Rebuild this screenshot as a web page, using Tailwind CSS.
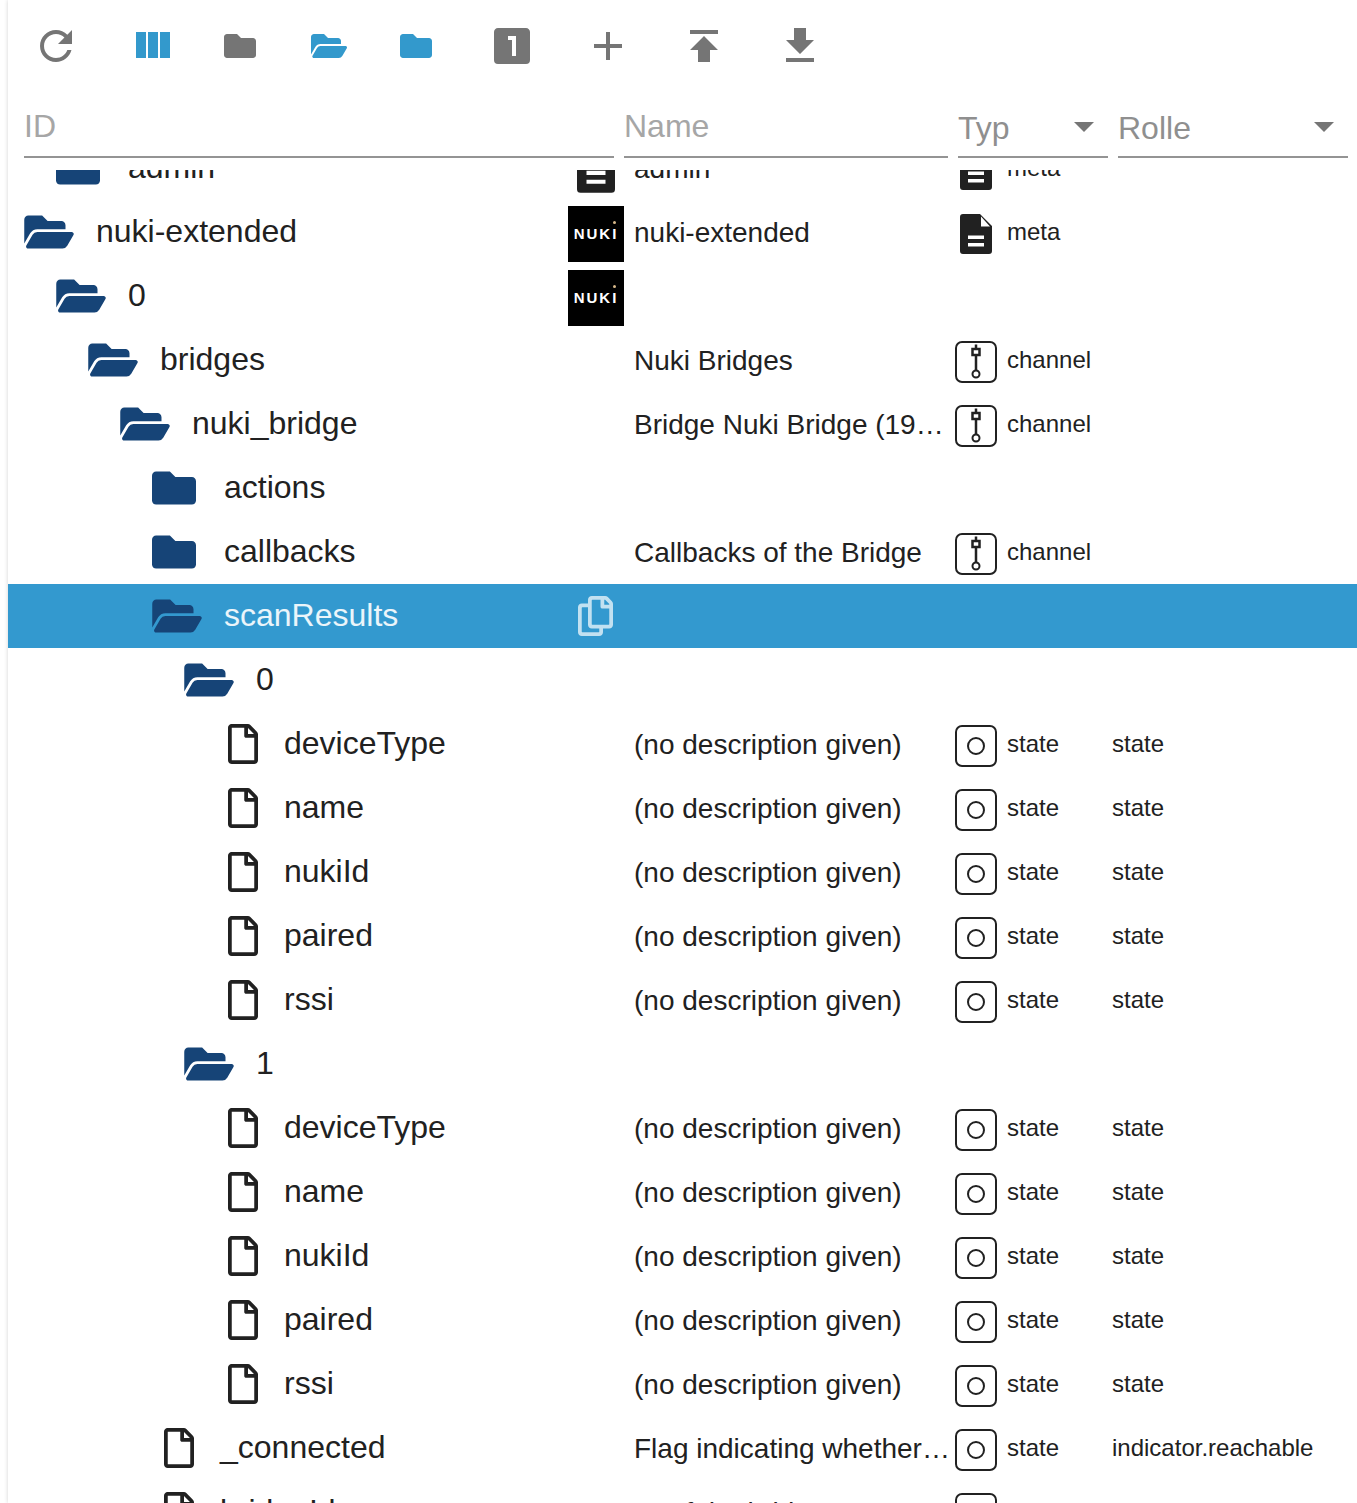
<!DOCTYPE html>
<html lang="de">
<head>
    <meta charset="UTF-8">
    <title>Objekte</title>
    <script src="https://cdn.jsdelivr.net/npm/@tailwindcss/browser@4"></script>
</head>
<body class="bg-white h-[1503px] overflow-hidden font-['Liberation_Sans',Arial,sans-serif] text-[#212121]">

    <!-- icon sprites -->
    <svg class="hidden">
        <symbol id="i-folder" viewBox="0 0 512 512"><path d="M464 128H272l-64-64H48C21.49 64 0 85.49 0 112v288c0 26.51 21.49 48 48 48h416c26.51 0 48-21.49 48-48V176c0-26.51-21.49-48-48-48z"/></symbol>
        <symbol id="i-open" viewBox="0 0 576 512"><path d="M572.694 292.093L500.27 416.248A63.997 63.997 0 0 1 444.989 448H45.025c-18.523 0-30.064-20.093-20.731-36.093l72.424-124.155A64 64 0 0 1 152 256h399.964c18.523 0 30.064 20.093 20.73 36.093zM152 224h328v-48c0-26.51-21.49-48-48-48H272l-64-64H48C21.49 64 0 85.49 0 112v278.046l69.077-118.418C86.214 242.25 117.989 224 152 224z"/></symbol>
        <symbol id="i-file" viewBox="0 0 384 512"><path d="M369.9 97.9L286 14C277 5 264.8-.1 252.1-.1H48C21.5 0 0 21.5 0 48v416c0 26.5 21.5 48 48 48h288c26.5 0 48-21.5 48-48V131.9c0-12.7-5.1-25-14.1-34zM332.1 128H256V51.9l76.1 76.1zM48 464V48h160v104c0 13.3 10.7 24 24 24h104v288H48z"/></symbol>
        <symbol id="i-meta" viewBox="0 0 32 40"><path fill-rule="evenodd" d="M3 0H20L32 12V37a3 3 0 0 1-3 3H3a3 3 0 0 1-3-3V3a3 3 0 0 1 3-3zM21 2.500V12.500H30zM8 21.500V25H24V21.500zM8 29V32.500H24V29z"/></symbol>
        <symbol id="i-channel" viewBox="0 0 42 42"><rect x="1" y="1" width="40" height="40" rx="6" fill="none" stroke="currentColor" stroke-width="2"/><path d="M21 3.500V8M21 14V29" fill="none" stroke="currentColor" stroke-width="2.500"/><rect x="17.500" y="8" width="7" height="6" fill="none" stroke="currentColor" stroke-width="2.500"/><circle cx="21" cy="33" r="3.500" fill="none" stroke="currentColor" stroke-width="2"/></symbol>
        <symbol id="i-state" viewBox="0 0 42 42"><rect x="1" y="1" width="40" height="40" rx="6" fill="none" stroke="currentColor" stroke-width="2"/><circle cx="21" cy="21" r="8" fill="none" stroke="currentColor" stroke-width="2"/></symbol>
    </svg>

    <div class="ml-2 h-[1503px] flex flex-col overflow-hidden shadow-[0_0_4px_rgba(0,0,0,0.18)]">

        <!-- toolbar -->
        <div class="h-[92px] shrink-0 flex items-center text-[#757575]">
            <svg class="w-12 h-12 ml-6 fill-current" viewBox="0 0 24 24"><path d="M17.65 6.35C16.2 4.9 14.21 4 12 4c-4.42 0-7.99 3.58-7.99 8s3.57 8 7.99 8c3.73 0 6.84-2.55 7.73-6h-2.08c-.82 2.33-3.04 4-5.65 4-3.31 0-6-2.69-6-6s2.69-6 6-6c1.66 0 3.14.69 4.22 1.78L13 11h7V4l-2.35 2.350z"/></svg>
            <svg class="w-12 h-12 ml-12 fill-[#3399cc]" viewBox="0 0 24 24"><path d="M10 18h5V5h-5v13zm-6 0h5V5H4v13zM16 5v13h5V5h-5z"/></svg>
            <svg class="w-8 h-8 ml-12 fill-current"><use href="#i-folder"/></svg>
            <svg class="w-9 h-8 ml-[55px] fill-[#3399cc]"><use href="#i-open"/></svg>
            <svg class="w-8 h-8 ml-[53px] fill-[#3399cc]"><use href="#i-folder"/></svg>
            <svg class="w-12 h-12 ml-14 fill-current" viewBox="0 0 24 24"><path d="M14,17H12V9H10V7H14M19,3H5C3.890,3 3,3.890 3,5V19A2,2 0 0,0 5,21H19A2,2 0 0,0 21,19V5C21,3.890 20.100,3 19,3Z"/></svg>
            <svg class="w-12 h-12 ml-12 fill-current" viewBox="0 0 24 24"><path d="M19 13h-6v6h-2v-6H5v-2h6V5h2v6h6v2z"/></svg>
            <svg class="w-12 h-12 ml-12 fill-current" viewBox="0 0 24 24"><path d="M5 4v2h14V4H5zm0 10h4v6h6v-6h4l-7-7-7 7z"/></svg>
            <svg class="w-12 h-12 ml-12 fill-current" viewBox="0 0 24 24"><path d="M19 9h-4V3H9v6H5l7 7 7-7zM5 18v2h14v-2H5z"/></svg>
        </div>

        <!-- filter row -->
        <div class="h-[66px] shrink-0 flex pl-4 gap-[10px] text-[32px] text-[#a6a6a6]">
            <div class="w-[590px] border-b-2 border-[#949494] h-[66px] flex items-start"><span class="leading-[68px]">ID</span></div>
            <div class="w-[324px] border-b-2 border-[#949494] h-[66px] flex items-start"><span class="leading-[68px]">Name</span></div>
            <div class="w-[150px] border-b-2 border-[#949494] h-[66px] flex items-start text-[#8f8f8f]">
                <span class="leading-[72px]">Typ</span>
                <span class="ml-auto mr-[14px] mt-[30px] w-0 h-0 border-x-[10px] border-x-transparent border-t-[10px] border-t-[#757575]"></span>
            </div>
            <div class="w-[230px] border-b-2 border-[#949494] h-[66px] flex items-start text-[#8f8f8f]">
                <span class="leading-[72px]">Rolle</span>
                <span class="ml-auto mr-[14px] mt-[30px] w-0 h-0 border-x-[10px] border-x-transparent border-t-[10px] border-t-[#757575]"></span>
            </div>
        </div>

        <!-- tree -->
        <div class="mt-3 flex-1 overflow-hidden">
            <div class="-mt-[34px]">

                <div class="h-16 flex items-center">
                    <div class="w-[616px] pl-12 flex items-center text-[32px]"><svg class="w-11 h-[44px] fill-[#164477] shrink-0"><use href="#i-folder"/></svg><span class="ml-7 -mt-[2px]">admin</span><svg class="w-[38px] h-[50px] ml-auto mr-[9px] mt-[2px] fill-[#212121] shrink-0"><use href="#i-meta"/></svg></div>
                    <div class="w-[326px] pl-[10px] pt-[2px] text-[28px] truncate">admin</div>
                    <div class="w-[162px] pl-[10px] flex items-center text-[24px]"><svg class="w-8 h-10 fill-[#212121] mt-1 shrink-0"><use href="#i-meta"/></svg><span class="ml-[15px]">meta</span></div>
                </div>

                <div class="h-16 flex items-center">
                    <div class="w-[616px] pl-4 flex items-center text-[32px]"><svg class="w-[50px] h-[44px] fill-[#164477] shrink-0"><use href="#i-open"/></svg><span class="ml-[22px] -mt-[2px]">nuki-extended</span>
                        <div class="relative w-14 h-14 ml-auto mt-1 bg-black text-white flex items-center justify-center shrink-0 text-[15px] font-bold tracking-[2px]">NUKI<span class="absolute left-[45px] top-[15px] w-[3px] h-[3px] rounded-full bg-[#d8b98a]"></span></div>
                    </div>
                    <div class="w-[326px] pl-[10px] pt-[2px] text-[28px] truncate">nuki-extended</div>
                    <div class="w-[162px] pl-[10px] flex items-center text-[24px]"><svg class="w-8 h-10 fill-[#212121] mt-1 shrink-0"><use href="#i-meta"/></svg><span class="ml-[15px]">meta</span></div>
                </div>

                <div class="h-16 flex items-center">
                    <div class="w-[616px] pl-12 flex items-center text-[32px]"><svg class="w-[50px] h-[44px] fill-[#164477] shrink-0"><use href="#i-open"/></svg><span class="ml-[22px] -mt-[2px]">0</span>
                        <div class="relative w-14 h-14 ml-auto mt-1 bg-black text-white flex items-center justify-center shrink-0 text-[15px] font-bold tracking-[2px]">NUKI<span class="absolute left-[45px] top-[15px] w-[3px] h-[3px] rounded-full bg-[#d8b98a]"></span></div>
                    </div>
                </div>

                <div class="h-16 flex items-center">
                    <div class="w-[616px] pl-20 flex items-center text-[32px]"><svg class="w-[50px] h-[44px] fill-[#164477] shrink-0"><use href="#i-open"/></svg><span class="ml-[22px] -mt-[2px]">bridges</span></div>
                    <div class="w-[326px] pl-[10px] pt-[2px] text-[28px] truncate">Nuki Bridges</div>
                    <div class="w-[162px] pl-[5px] flex items-center text-[24px]"><svg class="w-[42px] h-[42px] mt-1 shrink-0"><use href="#i-channel"/></svg><span class="ml-[10px]">channel</span></div>
                </div>

                <div class="h-16 flex items-center">
                    <div class="w-[616px] pl-28 flex items-center text-[32px]"><svg class="w-[50px] h-[44px] fill-[#164477] shrink-0"><use href="#i-open"/></svg><span class="ml-[22px] -mt-[2px]">nuki_bridge</span></div>
                    <div class="w-[326px] pl-[10px] pt-[2px] text-[28px] truncate">Bridge Nuki Bridge (192.168.178.2)</div>
                    <div class="w-[162px] pl-[5px] flex items-center text-[24px]"><svg class="w-[42px] h-[42px] mt-1 shrink-0"><use href="#i-channel"/></svg><span class="ml-[10px]">channel</span></div>
                </div>

                <div class="h-16 flex items-center">
                    <div class="w-[616px] pl-36 flex items-center text-[32px]"><svg class="w-11 h-[44px] fill-[#164477] shrink-0"><use href="#i-folder"/></svg><span class="ml-7 -mt-[2px]">actions</span></div>
                </div>

                <div class="h-16 flex items-center">
                    <div class="w-[616px] pl-36 flex items-center text-[32px]"><svg class="w-11 h-[44px] fill-[#164477] shrink-0"><use href="#i-folder"/></svg><span class="ml-7 -mt-[2px]">callbacks</span></div>
                    <div class="w-[326px] pl-[10px] pt-[2px] text-[28px] truncate">Callbacks of the Bridge</div>
                    <div class="w-[162px] pl-[5px] flex items-center text-[24px]"><svg class="w-[42px] h-[42px] mt-1 shrink-0"><use href="#i-channel"/></svg><span class="ml-[10px]">channel</span></div>
                </div>

                <div class="h-16 flex items-center bg-[#3399cf] text-white">
                    <div class="w-[616px] pl-36 flex items-center text-[32px]"><svg class="w-[50px] h-[44px] fill-[#164477] shrink-0"><use href="#i-open"/></svg><span class="ml-[22px] -mt-[2px] text-white/90">scanResults</span>
                        <svg class="w-[35px] h-10 ml-auto mr-[11px] fill-white/70 shrink-0" viewBox="0 0 448 512"><path d="M433.941 65.941l-51.882-51.882A48 48 0 0 0 348.118 0H176c-26.510 0-48 21.490-48 48v48H48c-26.510 0-48 21.490-48 48v320c0 26.510 21.490 48 48 48h224c26.510 0 48-21.490 48-48v-48h80c26.510 0 48-21.490 48-48V99.882a48 48 0 0 0-14.059-33.941zM266 464H54a6 6 0 0 1-6-6V150a6 6 0 0 1 6-6h74v224c0 26.510 21.490 48 48 48h96v42a6 6 0 0 1-6 6zm128-96H182a6 6 0 0 1-6-6V54a6 6 0 0 1 6-6h106v88c0 13.255 10.745 24 24 24h88v202a6 6 0 0 1-6 6zm6-256h-64V48h9.632c1.591 0 3.117.632 4.243 1.757l48.368 48.368a6 6 0 0 1 1.757 4.243V112z"/></svg>
                    </div>
                </div>

                <div class="h-16 flex items-center">
                    <div class="w-[616px] pl-44 flex items-center text-[32px]"><svg class="w-[50px] h-[44px] fill-[#164477] shrink-0"><use href="#i-open"/></svg><span class="ml-[22px] -mt-[2px]">0</span></div>
                </div>

                <div class="h-16 flex items-center">
                    <div class="w-[616px] pl-[220px] flex items-center text-[32px]"><svg class="w-[30px] h-10 fill-[#212121] shrink-0"><use href="#i-file"/></svg><span class="ml-[26px] -mt-[2px]">deviceType</span></div>
                    <div class="w-[326px] pl-[10px] pt-[2px] text-[28px] truncate">(no description given)</div>
                    <div class="w-[162px] pl-[5px] flex items-center text-[24px]"><svg class="w-[42px] h-[42px] mt-1 shrink-0"><use href="#i-state"/></svg><span class="ml-[10px]">state</span></div>
                    <div class="text-[24px]">state</div>
                </div>

                <div class="h-16 flex items-center">
                    <div class="w-[616px] pl-[220px] flex items-center text-[32px]"><svg class="w-[30px] h-10 fill-[#212121] shrink-0"><use href="#i-file"/></svg><span class="ml-[26px] -mt-[2px]">name</span></div>
                    <div class="w-[326px] pl-[10px] pt-[2px] text-[28px] truncate">(no description given)</div>
                    <div class="w-[162px] pl-[5px] flex items-center text-[24px]"><svg class="w-[42px] h-[42px] mt-1 shrink-0"><use href="#i-state"/></svg><span class="ml-[10px]">state</span></div>
                    <div class="text-[24px]">state</div>
                </div>

                <div class="h-16 flex items-center">
                    <div class="w-[616px] pl-[220px] flex items-center text-[32px]"><svg class="w-[30px] h-10 fill-[#212121] shrink-0"><use href="#i-file"/></svg><span class="ml-[26px] -mt-[2px]">nukiId</span></div>
                    <div class="w-[326px] pl-[10px] pt-[2px] text-[28px] truncate">(no description given)</div>
                    <div class="w-[162px] pl-[5px] flex items-center text-[24px]"><svg class="w-[42px] h-[42px] mt-1 shrink-0"><use href="#i-state"/></svg><span class="ml-[10px]">state</span></div>
                    <div class="text-[24px]">state</div>
                </div>

                <div class="h-16 flex items-center">
                    <div class="w-[616px] pl-[220px] flex items-center text-[32px]"><svg class="w-[30px] h-10 fill-[#212121] shrink-0"><use href="#i-file"/></svg><span class="ml-[26px] -mt-[2px]">paired</span></div>
                    <div class="w-[326px] pl-[10px] pt-[2px] text-[28px] truncate">(no description given)</div>
                    <div class="w-[162px] pl-[5px] flex items-center text-[24px]"><svg class="w-[42px] h-[42px] mt-1 shrink-0"><use href="#i-state"/></svg><span class="ml-[10px]">state</span></div>
                    <div class="text-[24px]">state</div>
                </div>

                <div class="h-16 flex items-center">
                    <div class="w-[616px] pl-[220px] flex items-center text-[32px]"><svg class="w-[30px] h-10 fill-[#212121] shrink-0"><use href="#i-file"/></svg><span class="ml-[26px] -mt-[2px]">rssi</span></div>
                    <div class="w-[326px] pl-[10px] pt-[2px] text-[28px] truncate">(no description given)</div>
                    <div class="w-[162px] pl-[5px] flex items-center text-[24px]"><svg class="w-[42px] h-[42px] mt-1 shrink-0"><use href="#i-state"/></svg><span class="ml-[10px]">state</span></div>
                    <div class="text-[24px]">state</div>
                </div>

                <div class="h-16 flex items-center">
                    <div class="w-[616px] pl-44 flex items-center text-[32px]"><svg class="w-[50px] h-[44px] fill-[#164477] shrink-0"><use href="#i-open"/></svg><span class="ml-[22px] -mt-[2px]">1</span></div>
                </div>

                <div class="h-16 flex items-center">
                    <div class="w-[616px] pl-[220px] flex items-center text-[32px]"><svg class="w-[30px] h-10 fill-[#212121] shrink-0"><use href="#i-file"/></svg><span class="ml-[26px] -mt-[2px]">deviceType</span></div>
                    <div class="w-[326px] pl-[10px] pt-[2px] text-[28px] truncate">(no description given)</div>
                    <div class="w-[162px] pl-[5px] flex items-center text-[24px]"><svg class="w-[42px] h-[42px] mt-1 shrink-0"><use href="#i-state"/></svg><span class="ml-[10px]">state</span></div>
                    <div class="text-[24px]">state</div>
                </div>

                <div class="h-16 flex items-center">
                    <div class="w-[616px] pl-[220px] flex items-center text-[32px]"><svg class="w-[30px] h-10 fill-[#212121] shrink-0"><use href="#i-file"/></svg><span class="ml-[26px] -mt-[2px]">name</span></div>
                    <div class="w-[326px] pl-[10px] pt-[2px] text-[28px] truncate">(no description given)</div>
                    <div class="w-[162px] pl-[5px] flex items-center text-[24px]"><svg class="w-[42px] h-[42px] mt-1 shrink-0"><use href="#i-state"/></svg><span class="ml-[10px]">state</span></div>
                    <div class="text-[24px]">state</div>
                </div>

                <div class="h-16 flex items-center">
                    <div class="w-[616px] pl-[220px] flex items-center text-[32px]"><svg class="w-[30px] h-10 fill-[#212121] shrink-0"><use href="#i-file"/></svg><span class="ml-[26px] -mt-[2px]">nukiId</span></div>
                    <div class="w-[326px] pl-[10px] pt-[2px] text-[28px] truncate">(no description given)</div>
                    <div class="w-[162px] pl-[5px] flex items-center text-[24px]"><svg class="w-[42px] h-[42px] mt-1 shrink-0"><use href="#i-state"/></svg><span class="ml-[10px]">state</span></div>
                    <div class="text-[24px]">state</div>
                </div>

                <div class="h-16 flex items-center">
                    <div class="w-[616px] pl-[220px] flex items-center text-[32px]"><svg class="w-[30px] h-10 fill-[#212121] shrink-0"><use href="#i-file"/></svg><span class="ml-[26px] -mt-[2px]">paired</span></div>
                    <div class="w-[326px] pl-[10px] pt-[2px] text-[28px] truncate">(no description given)</div>
                    <div class="w-[162px] pl-[5px] flex items-center text-[24px]"><svg class="w-[42px] h-[42px] mt-1 shrink-0"><use href="#i-state"/></svg><span class="ml-[10px]">state</span></div>
                    <div class="text-[24px]">state</div>
                </div>

                <div class="h-16 flex items-center">
                    <div class="w-[616px] pl-[220px] flex items-center text-[32px]"><svg class="w-[30px] h-10 fill-[#212121] shrink-0"><use href="#i-file"/></svg><span class="ml-[26px] -mt-[2px]">rssi</span></div>
                    <div class="w-[326px] pl-[10px] pt-[2px] text-[28px] truncate">(no description given)</div>
                    <div class="w-[162px] pl-[5px] flex items-center text-[24px]"><svg class="w-[42px] h-[42px] mt-1 shrink-0"><use href="#i-state"/></svg><span class="ml-[10px]">state</span></div>
                    <div class="text-[24px]">state</div>
                </div>

                <div class="h-16 flex items-center">
                    <div class="w-[616px] pl-[156px] flex items-center text-[32px]"><svg class="w-[30px] h-10 fill-[#212121] shrink-0"><use href="#i-file"/></svg><span class="ml-[26px] -mt-[2px]">_connected</span></div>
                    <div class="w-[326px] pl-[10px] pt-[2px] text-[28px] truncate">Flag indicating whether the bridge is connected</div>
                    <div class="w-[162px] pl-[5px] flex items-center text-[24px]"><svg class="w-[42px] h-[42px] mt-1 shrink-0"><use href="#i-state"/></svg><span class="ml-[10px]">state</span></div>
                    <div class="text-[24px]">indicator.reachable</div>
                </div>

                <div class="h-16 flex items-center">
                    <div class="w-[616px] pl-[156px] flex items-center text-[32px]"><svg class="w-[30px] h-10 fill-[#212121] shrink-0"><use href="#i-file"/></svg><span class="ml-[26px] -mt-[2px]">bridgeId</span></div>
                    <div class="w-[326px] pl-[10px] pt-[2px] text-[28px] truncate">ID of the bridge</div>
                    <div class="w-[162px] pl-[5px] flex items-center text-[24px]"><svg class="w-[42px] h-[42px] mt-1 shrink-0"><use href="#i-state"/></svg><span class="ml-[10px]">state</span></div>
                    <div class="text-[24px]">state</div>
                </div>

            </div>
        </div>
    </div>
</body>
</html>
